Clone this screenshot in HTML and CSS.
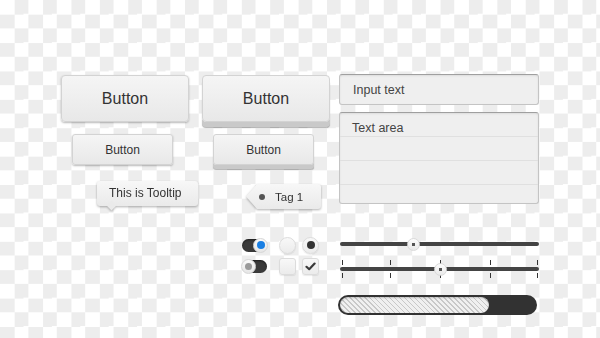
FILE: index.html
```html
<!DOCTYPE html>
<html lang="en">
<head>
    <meta charset="UTF-8">
    <meta name="viewport" content="width=device-width, initial-scale=1.0">
    <title>UI Kit</title>
    <link rel="stylesheet" href="styles.css">
</head>
<body>
    <div class="board">
        <div class="left">
            <div class="cell"><button class="btn btn-lg">Button</button></div>
            <div class="cell"><button class="btn btn-lg btn-3d">Button</button></div>
            <div class="cell cell-sm"><button class="btn btn-sm">Button</button></div>
            <div class="cell cell-sm"><button class="btn btn-sm btn-3d-sm">Button</button></div>
            <div class="cell"><div class="tooltip">This is Tooltip</div></div>
            <div class="cell">
                <div class="tag-wrap">
                    <div class="tag"><span class="tag-dot"></span>Tag 1</div>
                </div>
            </div>
            <div class="cell"></div>
            <div class="cell">
                <div class="controls">
                    <div class="toggle on"><span class="knob"><i></i></span></div>
                    <div class="radio"></div>
                    <div class="radio checked"></div>
                    <div class="toggle off"><span class="knob"><i></i></span></div>
                    <div class="check"></div>
                    <div class="check checked">
                        <svg width="11" height="9" viewBox="0 0 11 9"><path d="M1.5 4.8 L4.2 7.2 L9.6 1.6" fill="none" stroke="#3a3a3a" stroke-width="2.2" stroke-linecap="round" stroke-linejoin="round"/></svg>
                    </div>
                </div>
            </div>
        </div>

        <div class="right">
            <div class="input">Input text</div>
            <div class="textarea">
                <div class="ta-row first">Text area</div>
                <div class="ta-row"></div>
                <div class="ta-row"></div>
                <div class="ta-row last"></div>
            </div>
            <div class="slider">
                <div class="track"></div>
                <span class="thumb" style="left: 73px"></span>
            </div>
            <div class="slider ticked">
                <span class="tick" style="left: 2px"></span>
                <span class="tick" style="left: 50px"></span>
                <span class="tick" style="left: 100px"></span>
                <span class="tick" style="left: 150px"></span>
                <span class="tick" style="left: 197px"></span>
                <div class="track"></div>
                <span class="thumb" style="left: 100px"></span>
            </div>
            <div class="progress">
                <div class="bar" style="width: 149px"></div>
            </div>
        </div>
    </div>
</body>
</html>
```

FILE: styles.css
```css
body {
    margin: 0;
    width: 600px;
    height: 338px;
    overflow: hidden;
    font-family: 'Liberation Sans', Arial, sans-serif;
    color: #333;
    background: conic-gradient(#ededed 25%, #fff 0 50%, #ededed 0 75%, #fff 0) 0 0 / 28.4px 28.4px;
}
.board {
    display: flex;
    padding: 74px 0 0 61px;
}
.left {
    display: grid;
    grid-template-columns: 128px 128px;
    grid-template-rows: 59px 47px 56px 37px;
    column-gap: 13px;
    margin-top: 1px;
    width: 269px;
}
.cell {
    position: relative;
}
.cell-sm {
    padding-left: 11px;
}

/* buttons */
.btn {
    display: block;
    padding: 0;
    font-family: inherit;
    color: #333;
    border: 1px solid #d3d3d3;
    border-radius: 4px;
    background: linear-gradient(#f5f5f5, #e8e8e8);
    box-shadow: 0 1px 2px rgba(0, 0, 0, 0.28);
}
.btn-lg {
    width: 128px;
    height: 47px;
    font-size: 16px;
}
.btn-sm {
    width: 101px;
    height: 31px;
    font-size: 12px;
    border-radius: 3px;
}
.btn-3d {
    box-shadow: 0 5px 0 #c9c9c9, 0 6px 1px rgba(0, 0, 0, 0.3);
}
.btn-3d-sm {
    box-shadow: 0 4px 0 #c9c9c9, 0 5px 1px rgba(0, 0, 0, 0.3);
}

/* tooltip */
.tooltip {
    position: relative;
    margin-left: 36px;
    width: 101px;
    height: 25px;
    box-sizing: border-box;
    padding-left: 12px;
    line-height: 25px;
    font-size: 12px;
    border-radius: 3px;
    background: linear-gradient(#f7f7f7, #eaeaea);
    filter: drop-shadow(0 1px 1px rgba(0, 0, 0, 0.3));
}
.tooltip::after {
    content: '';
    position: absolute;
    left: 11px;
    bottom: -3px;
    width: 7px;
    height: 7px;
    background: #eaeaea;
    transform: rotate(45deg);
}

/* tag */
.tag-wrap {
    margin: 3px 0 0 44px;
    width: 75px;
    filter: drop-shadow(0 1px 1px rgba(0, 0, 0, 0.3));
}
.tag {
    display: flex;
    align-items: center;
    height: 25px;
    padding-left: 13px;
    font-size: 11.5px;
    border-radius: 0 3px 3px 0;
    background: linear-gradient(#f7f7f7, #eaeaea);
    clip-path: polygon(11px 0, 100% 0, 100% 100%, 11px 100%, 0 50%);
}
.tag-dot {
    width: 6px;
    height: 6px;
    margin-right: 10px;
    border-radius: 50%;
    background: #555;
}

/* toggles, radios, checks */
.controls {
    display: grid;
    grid-template-columns: 25px 29px 23px;
    grid-template-rows: 16px 16px;
    row-gap: 5px;
    margin-left: 40px;
    align-items: center;
}
.controls > :nth-child(3n+2) {
    margin-left: 12px;
}
.controls > :nth-child(3n) {
    margin-left: 6px;
}
.toggle {
    position: relative;
    width: 25px;
    height: 13px;
    border-radius: 7px;
    background: #3b3b3b;
    box-shadow: inset 0 1px 2px rgba(0, 0, 0, 0.5);
}
.knob {
    position: absolute;
    top: -1px;
    width: 15px;
    height: 15px;
    box-sizing: border-box;
    border-radius: 50%;
    border: 1px solid #d6d6d6;
    background: linear-gradient(#fafafa, #e6e6e6);
    display: flex;
    align-items: center;
    justify-content: center;
}
.toggle.on .knob {
    right: -1px;
}
.toggle.off .knob {
    left: -1px;
}
.knob i {
    width: 8px;
    height: 8px;
    border-radius: 50%;
    background: #1a7fe3;
}
.toggle.off .knob i {
    width: 7px;
    height: 7px;
    background: #9a9a9a;
}
.radio, .check {
    width: 17px;
    height: 17px;
    box-sizing: border-box;
    border: 1px solid #dcdcdc;
    background: linear-gradient(#f8f8f8, #ebebeb);
    box-shadow: 0 1px 1px rgba(0, 0, 0, 0.08);
    display: flex;
    align-items: center;
    justify-content: center;
}
.radio {
    border-radius: 50%;
}
.radio.checked::after {
    content: '';
    width: 8px;
    height: 8px;
    border-radius: 50%;
    background: #333;
}
.check {
    border-radius: 3px;
}

/* right column */
.right {
    margin-left: 9px;
    width: 200px;
    font-size: 12.5px;
    color: #444;
}
.input, .textarea {
    box-sizing: border-box;
    border: 1px solid #c4c4c4;
    border-top-color: #9f9f9f;
    border-radius: 3px;
    background: #efefef;
    box-shadow: inset 0 1px 2px rgba(0, 0, 0, 0.08);
}
.input {
    height: 31px;
    line-height: 31px;
    padding-left: 13px;
}
.textarea {
    margin-top: 7px;
    height: 92px;
}
.ta-row {
    height: 23px;
    border-bottom: 1px solid #e0e0e0;
}
.ta-row.first {
    box-sizing: border-box;
    height: 24px;
    padding: 8px 0 0 12px;
    line-height: 15px;
}
.ta-row.last {
    border-bottom: none;
}

/* sliders */
.slider {
    position: relative;
    margin: 33px 0 0 1px;
    width: 199px;
    height: 14px;
}
.slider.ticked {
    margin-top: 9px;
    height: 18px;
}
.track {
    position: absolute;
    left: 0;
    right: 0;
    top: 50%;
    height: 4px;
    margin-top: -2px;
    border-radius: 2px;
    background: #444;
}
.thumb {
    position: absolute;
    top: 50%;
    width: 13px;
    height: 13px;
    margin: -6.5px 0 0 -6.5px;
    box-sizing: border-box;
    border-radius: 50%;
    border: 1px solid #dadada;
    background: radial-gradient(circle, #555 0 1.6px, transparent 2px), linear-gradient(#fdfdfd, #e9e9e9);
}
.tick {
    position: absolute;
    top: 0;
    bottom: 0;
    width: 1px;
    background: linear-gradient(#333 0 5px, transparent 5px 13px, #333 13px);
}

/* progress */
.progress {
    margin: 17px 0 0 -1px;
    width: 199px;
    height: 20px;
    box-sizing: border-box;
    padding: 2px;
    border-radius: 10px;
    background: #323232;
}
.bar {
    height: 16px;
    border-radius: 8px;
    background: repeating-linear-gradient(45deg, #c8c8c8 0 1px, #f0f0f0 1px 3.5px);
    box-shadow: inset 0 1px 2px rgba(0, 0, 0, 0.2);
}
```
